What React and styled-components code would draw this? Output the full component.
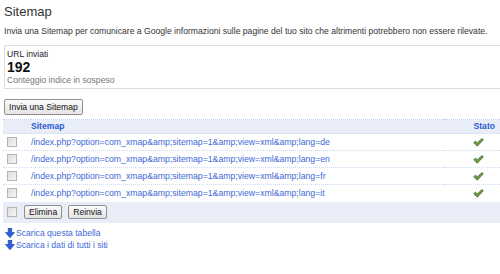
import React from 'react';
import styled, { createGlobalStyle } from 'styled-components';

const COLORS = {
  text: '#333333',
  muted: '#777777',
  link: '#4169d6',
  header: '#2a5bd0',
  rowBg: '#e8edf8',
  rule: '#cfdcf1',
  boxBorder: '#e2dada',
};

const SITEMAPS = ['de', 'en', 'fr', 'it'].map(
  (lang) => `/index.php?option=com_xmap&amp;sitemap=1&amp;view=xml&amp;lang=${lang}`
);

const GlobalStyle = createGlobalStyle`
  html, body {
    margin: 0;
    background: #ffffff;
    overflow: hidden;
  }
  body {
    font-family: Arial, "Liberation Sans", sans-serif;
    color: ${COLORS.text};
  }
`;

const CheckIcon = () => (
  <svg width="11" height="9" viewBox="0 0 11 9">
    <path
      d="M0.8 4.6 L2.6 3.2 L4.3 4.9 L9 0.6 L10.3 1.8 L4.3 8.2 Z"
      fill="#6f9f45"
      stroke="#3d5f25"
      strokeWidth="0.8"
      strokeLinejoin="round"
    />
  </svg>
);

const DownArrow = () => (
  <svg width="10" height="10" viewBox="0 0 10 10">
    <path d="M3.2 0 H6.8 V4.5 H9.6 L5 9.8 L0.4 4.5 H3.2 Z" fill="#2e5fd6" stroke="#1d45a8" strokeWidth="0.6" />
  </svg>
);

const App = () => {
  return (
    <Page>
      <GlobalStyle />
      <Title>Sitemap</Title>
      <Intro>
        Invia una Sitemap per comunicare a Google informazioni sulle pagine del tuo sito che altrimenti potrebbero non
        essere rilevate.
      </Intro>
      <StatsBox>
        <StatLabel>URL inviati</StatLabel>
        <StatValue>192</StatValue>
        <StatNote>Conteggio indice in sospeso</StatNote>
      </StatsBox>
      <Button>Invia una Sitemap</Button>
      <Table>
        <thead>
          <HeadRow>
            <CheckCell />
            <HeadCell>Sitemap</HeadCell>
            <HeadCell align='right'>Stato</HeadCell>
          </HeadRow>
        </thead>
        <tbody>
          {SITEMAPS.map((url) => (
            <Row key={url}>
              <CheckCell>
                <Checkbox type='checkbox' />
              </CheckCell>
              <Cell>
                <Link href='#'>{url}</Link>
              </Cell>
              <StatusCell>
                <CheckIcon />
              </StatusCell>
            </Row>
          ))}
          <FootRow>
            <CheckCell>
              <Checkbox type='checkbox' />
            </CheckCell>
            <td colSpan={2}>
              <Actions>
                <SmallButton>Elimina</SmallButton>
                <SmallButton>Reinvia</SmallButton>
              </Actions>
            </td>
          </FootRow>
        </tbody>
      </Table>
      <Downloads>
        <Download href='#'>
          <DownArrow />
          Scarica questa tabella
        </Download>
        <Download href='#'>
          <DownArrow />
          Scarica i dati di tutti i siti
        </Download>
      </Downloads>
    </Page>
  );
};

const Page = styled.div`
  width: 516px;
  padding: 4px 0 0 3px;
  font-size: 8.6px;
`;

const Title = styled.h2`
  margin: 0 0 0 1px;
  font-size: 13px;
  line-height: 16px;
  font-weight: normal;
  color: #333333;
`;

const Intro = styled.p`
  margin: 6px 0 0 1px;
  font-size: 8.6px;
  line-height: 10px;
  color: #333333;
`;

const StatsBox = styled.div`
  margin-top: 9px;
  margin-left: 1px;
  border: 1px solid ${COLORS.boxBorder};
  border-right: none;
  padding: 3px 2px 2px;
`;

const StatLabel = styled.div`
  font-size: 8.6px;
  line-height: 11px;
  color: #222222;
`;

const StatValue = styled.div`
  font-size: 14px;
  line-height: 15px;
  font-weight: bold;
  color: #111111;
`;

const StatNote = styled.div`
  font-size: 8.6px;
  line-height: 11px;
  color: ${COLORS.muted};
`;

const Button = styled.button`
  display: block;
  margin: 10px 0 4px 1px;
  height: 16px;
  padding: 0 4px;
  font-family: inherit;
  font-size: 8.6px;
  color: #111111;
  background: linear-gradient(#fbfbfb, #e4e4e4);
  border: 1px solid #8f8f8f;
  border-radius: 2px;
`;

const SmallButton = styled(Button)`
  display: inline-block;
  margin: 0;
  height: 14px;
`;

const Table = styled.table`
  width: 497px;
  border-collapse: collapse;
  font-size: 8.6px;
`;

const HeadRow = styled.tr`
  background: ${COLORS.rowBg};
  border-top: 1px dotted #b9cdee;
  height: 14px;
`;

const HeadCell = styled.th`
  padding: 0 ${({ align }) => (align === 'right' ? '5px' : '0')} 0 0;
  text-align: ${({ align }) => align || 'left'};
  font-weight: bold;
  color: ${COLORS.header};
  line-height: 13px;
`;

const Row = styled.tr`
  height: 17px;
  border-top: 1px dotted ${COLORS.rule};
`;

const FootRow = styled.tr`
  height: 21px;
  background: ${COLORS.rowBg};
`;

const CheckCell = styled.td`
  width: 28px;
  padding: 0;
  vertical-align: middle;
`;

const Cell = styled.td`
  padding: 0;
  vertical-align: middle;
`;

const StatusCell = styled.td`
  width: 40px;
  padding: 0 16px 0 0;
  text-align: right;
  vertical-align: middle;
  line-height: 0;
`;

const Checkbox = styled.input`
  appearance: none;
  display: block;
  margin: 0 0 0 4px;
  width: 10px;
  height: 10px;
  border: 1px solid #b4b4b4;
  background: linear-gradient(135deg, #dcdcdc, #f6f6f6);
`;

const Actions = styled.div`
  display: flex;
  gap: 6px;
  margin-left: -8px;
`;

const Link = styled.a`
  color: ${COLORS.link};
  text-decoration: none;
  font-size: 8.7px;
`;

const Downloads = styled.div`
  margin-top: 4px;
  display: flex;
  flex-direction: column;
`;

const Download = styled.a`
  display: flex;
  align-items: center;
  gap: 1px;
  height: 12.5px;
  margin-left: 2px;
  font-size: 8.6px;
  color: ${COLORS.link};
  text-decoration: none;
`;

export default App;
